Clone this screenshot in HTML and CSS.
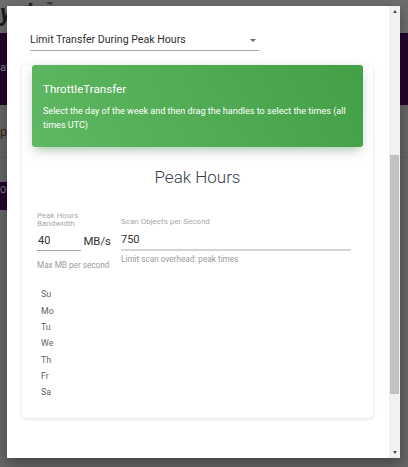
FILE: index.html
```html
<!DOCTYPE html>
<html lang="en">
<head>
<meta charset="utf-8">
<title>Peak Hours</title>
<link rel="stylesheet" href="styles.css">
</head>
<body>
<div class="page">
  <header class="bg-top"><span class="logo">ycle<span class="tm">™</span></span></header>
  <nav class="bg-nav"><span class="nav-text">at</span></nav>
  <main class="bg-main">
    <p class="bg-line">p</p>
    <div class="bg-sep"></div>
    <div class="bg-btn">ON</div>
  </main>
</div>

<div class="modal">
  <div class="modal-content">
    <div class="select">
      <span class="select-text">Limit Transfer During Peak Hours</span>
      <span class="caret"></span>
    </div>

    <div class="card">
      <div class="card-header">
        <h4 class="card-title">ThrottleTransfer</h4>
        <p class="card-desc">Select the day of the week and then drag the handles to select the times (all times UTC)</p>
      </div>
      <div class="card-body">
        <h3 class="peak-title">Peak Hours</h3>
        <div class="fields">
          <label class="label label-bw">Peak Hours<br>Bandwidth</label>
          <label class="label label-scan">Scan Objects per Second</label>
          <div class="input-row">
            <span class="input input-bw">40</span>
            <span class="unit">MB/s</span>
          </div>
          <span class="input input-scan">750</span>
          <small class="help help-bw">Max MB per second</small>
          <small class="help help-scan">Limit scan overhead: peak times</small>
        </div>
        <ul class="days">
          <li>Su</li>
          <li>Mo</li>
          <li>Tu</li>
          <li>We</li>
          <li>Th</li>
          <li>Fr</li>
          <li>Sa</li>
        </ul>
      </div>
    </div>
  </div>

  <div class="scrollbar">
    <div class="sb-btn"><span class="arrow-up"></span></div>
    <div class="sb-track"><div class="sb-thumb"></div></div>
    <div class="sb-btn"><span class="arrow-down"></span></div>
  </div>
</div>
</body>
</html>
```

FILE: styles.css
```css
* { box-sizing: border-box; }

html, body {
  margin: 0;
  padding: 0;
  height: 100%;
}

body {
  background: #6a6a6a;
  font-family: Roboto, "Helvetica Neue", Arial, sans-serif;
  overflow: hidden;
  position: relative;
}

/* ---------- dimmed page behind the dialog ---------- */
.page {
  width: 408px;
  height: 467px;
}

.bg-top {
  height: 33px;
  background: #6d6d6d;
  overflow: hidden;
}

.logo {
  display: block;
  margin-left: 0;
  margin-top: -7px;
  font-size: 24px;
  font-weight: 700;
  font-style: italic;
  color: #1e1e1e;
  line-height: 26px;
  letter-spacing: 1px;
}

.logo .tm {
  font-size: 10px;
  vertical-align: 12px;
  font-style: normal;
}

.bg-nav {
  height: 72px;
  background: #22062c;
  overflow: hidden;
}

.nav-text {
  display: block;
  margin-top: 28px;
  font-size: 11px;
  color: #8b8390;
}

.bg-main {
  height: 362px;
  background: #676767;
  overflow: hidden;
  padding-top: 1px;
}

.bg-line {
  margin: 18px 0 0;
  font-size: 13px;
  color: #3a200e;
  line-height: 16px;
}

.bg-sep {
  height: 1px;
  background: #5f5f5f;
  margin-top: 17px;
}

.bg-btn {
  margin-top: 24px;
  width: 40px;
  height: 28px;
  background: #22062c;
  color: #8c8490;
  font-size: 9px;
  line-height: 16px;
  padding-left: 0;
}

/* ---------- dialog ---------- */
.modal {
  position: absolute;
  left: 7px;
  top: 6px;
  width: 393px;
  height: 452px;
  background: #ffffff;
  display: flex;
  box-shadow: 0 6px 14px rgba(0, 0, 0, 0.35);
  overflow: hidden;
}

.modal-content {
  flex: 1;
  padding-top: 27px;
  min-width: 0;
}

.select {
  margin-left: 23px;
  width: 229px;
  display: flex;
  align-items: center;
  justify-content: space-between;
  border-bottom: 1px solid #a9a9a9;
  padding-bottom: 3px;
}

.select-text {
  font-size: 10.6px;
  line-height: 14px;
  color: #2f2f2f;
}

.caret {
  width: 0;
  height: 0;
  margin-right: 3px;
  border-left: 3.5px solid transparent;
  border-right: 3.5px solid transparent;
  border-top: 3.5px solid #666;
}

.card {
  margin: 27px 16px 0 15px;
  background: #fff;
  border-radius: 5px;
  box-shadow: 0 1px 4px rgba(0, 0, 0, 0.12);
}

.card-header {
  margin: -13px 10px 0;
  padding: 17px 11px 15px;
  border-radius: 3px;
  background: linear-gradient(60deg, #5fb863, #43a047);
  box-shadow: 0 4px 14px rgba(0, 0, 0, 0.12), 0 6px 9px -5px rgba(76, 175, 80, 0.45);
  color: #fff;
}

.card-title {
  margin: 0;
  font-size: 11.6px;
  font-weight: 400;
  line-height: 14px;
}

.card-desc {
  margin: 8px 0 0;
  font-size: 9.05px;
  line-height: 14px;
  font-weight: 400;
}

.card-body {
  padding: 20px 22px 18px 15px;
}

.peak-title {
  margin: 0;
  text-align: center;
  font-size: 17px;
  line-height: 20px;
  font-weight: 300;
  color: #36404e;
  padding-left: 7px;
}

.fields {
  display: grid;
  grid-template-columns: 74px 1fr;
  column-gap: 10px;
  margin-top: 25px;
}

.label {
  font-size: 8px;
  line-height: 8.2px;
  color: #a8a8a8;
  align-self: end;
  white-space: nowrap;
}

.label-scan {
  margin-bottom: 2.5px;
}

.input-row {
  display: flex;
  align-items: flex-end;
  margin-top: 4.5px;
}

.input {
  font-size: 11px;
  line-height: 14px;
  color: #333;
  padding-left: 1px;
}

.input-bw {
  width: 48px;
  border-bottom: 1px solid #a3a3a3;
  padding-bottom: 2px;
}

.unit {
  margin-left: 2px;
  font-size: 11.4px;
  line-height: 14px;
  color: #333;
  padding-bottom: 3px;
}

.input-scan {
  margin-top: 4.5px;
  border-bottom: 2px solid #d4d4d4;
  padding-bottom: 2px;
  padding-left: 0;
}

.help {
  font-size: 8.2px;
  line-height: 9px;
  color: #9a9a9a;
  white-space: nowrap;
}

.help-bw {
  margin-top: 10.5px;
}

.help-scan {
  margin-top: 4.5px;
}

.days {
  list-style: none;
  margin: 16px 0 0;
  padding: 0 0 0 4px;
}

.days li {
  font-size: 8.8px;
  line-height: 16.3px;
  color: #5f5f5f;
}

/* ---------- scrollbar ---------- */
.scrollbar {
  width: 11px;
  background: #f1f1f1;
  display: flex;
  flex-direction: column;
}

.sb-btn {
  height: 11px;
  display: flex;
  align-items: center;
  justify-content: center;
}

.arrow-up {
  width: 0;
  height: 0;
  border-left: 2.5px solid transparent;
  border-right: 2.5px solid transparent;
  border-bottom: 3px solid #505050;
}

.arrow-down {
  width: 0;
  height: 0;
  border-left: 2.5px solid transparent;
  border-right: 2.5px solid transparent;
  border-top: 3px solid #505050;
}

.sb-track {
  flex: 1;
  padding: 138px 1px 0;
}

.sb-thumb {
  height: 239px;
  background: #c1c1c1;
}
```
